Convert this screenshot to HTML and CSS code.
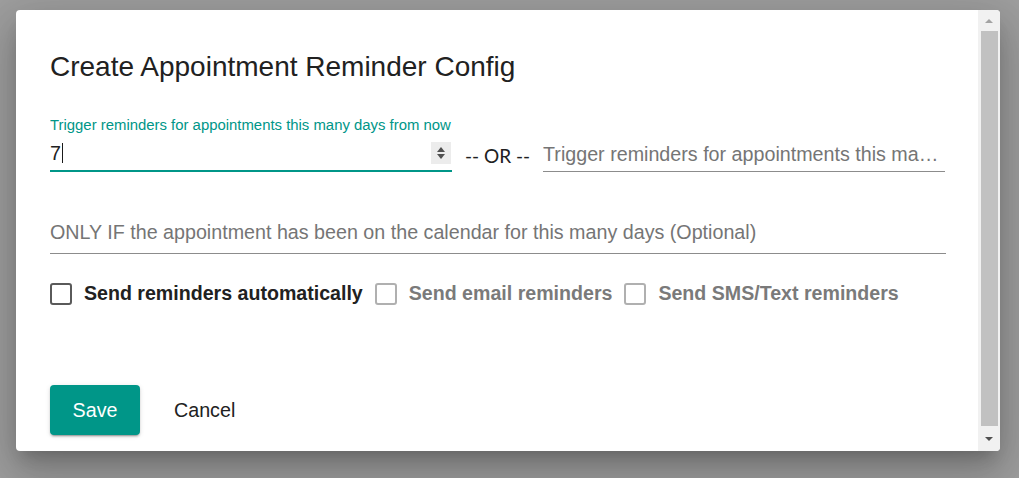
FILE: index.html
```html
<!DOCTYPE html>
<html lang="en">
<head>
<meta charset="utf-8">
<title>Create Appointment Reminder Config</title>
<link rel="stylesheet" href="styles.css">
</head>
<body>
<div class="backdrop">
  <div class="dialog" role="dialog">
    <div class="dialog-main">
      <h2 class="dialog-title">Create Appointment Reminder Config</h2>
      <div class="row">
        <div class="field field-focused">
          <label class="field-label">Trigger reminders for appointments this many days from now</label>
          <div class="field-input">
            <span class="value">7</span><span class="caret"></span>
            <span class="spinner"><span class="tri tri-up"></span><span class="tri tri-down"></span></span>
          </div>
        </div>
        <div class="or">-- OR --</div>
        <div class="field">
          <div class="field-input field-input-plain">
            <input class="text-input" type="text" placeholder="Trigger reminders for appointments this many hours from now">
          </div>
        </div>
      </div>
      <div class="field field-full">
        <div class="field-input field-input-plain">
          <input class="text-input" type="text" placeholder="ONLY IF the appointment has been on the calendar for this many days (Optional)">
        </div>
      </div>
      <div class="checks">
        <label class="check"><span class="box"></span><span class="check-text">Send reminders automatically</span></label>
        <label class="check check-disabled"><span class="box"></span><span class="check-text">Send email reminders</span></label>
        <label class="check check-disabled"><span class="box"></span><span class="check-text">Send SMS/Text reminders</span></label>
      </div>
      <div class="actions">
        <button class="btn btn-primary" type="button">Save</button>
        <button class="btn btn-text" type="button">Cancel</button>
      </div>
    </div>
    <div class="scrollbar" aria-hidden="true">
      <div class="sb-btn sb-up"><span class="sb-arrow-up"></span></div>
      <div class="sb-thumb"></div>
      <div class="sb-btn sb-down"><span class="sb-arrow-down"></span></div>
    </div>
  </div>
</div>
</body>
</html>
```
FILE: styles.css
```css
* { box-sizing: border-box; }
html, body { margin: 0; padding: 0; }
body {
  width: 1019px;
  height: 478px;
  overflow: hidden;
  font-family: "Liberation Sans", Arial, sans-serif;
  background: #9e9e9e;
}
.backdrop {
  padding: 10px 19px 27px 16px;
  height: 478px;
}
.dialog {
  display: flex;
  height: 441px;
  background: #fff;
  border-radius: 4px;
  overflow: hidden;
  box-shadow: 0 11px 15px -7px rgba(0,0,0,0.2), 0 24px 38px 3px rgba(0,0,0,0.14), 0 9px 46px 8px rgba(0,0,0,0.12);
}
.dialog-main {
  flex: 1;
  padding: 40px 33px 16px 34px;
  display: flex;
  flex-direction: column;
}
.dialog-title {
  margin: 0;
  font-weight: 400;
  font-size: 28px;
  line-height: 34px;
  color: #212121;
}
.row {
  display: flex;
  align-items: flex-end;
  margin-top: 33px;
}
.field { flex: 1; display: flex; flex-direction: column; min-width: 0; }
.field-label {
  font-size: 14.9px;
  line-height: 17px;
  color: #009688;
  white-space: nowrap;
  overflow: hidden;
  text-overflow: ellipsis;
  margin-bottom: 2px;
}
.field-input {
  display: flex;
  align-items: center;
  height: 36px;
  border-bottom: 1px solid #8c8c8c;
}
.field-focused .field-input {
  border-bottom: 2px solid #009688;
  height: 36px;
}
.value {
  font-size: 19.7px;
  color: #212121;
  line-height: 22px;
}
.caret {
  width: 1px;
  height: 20px;
  background: #1a1a1a;
  margin-left: 1px;
}
.spinner {
  margin-left: auto;
  margin-right: 1px;
  width: 20px;
  height: 22px;
  background: #ececec;
  display: flex;
  flex-direction: column;
  align-items: center;
  justify-content: center;
  gap: 2px;
}
.tri { width: 0; height: 0; border-left: 4px solid transparent; border-right: 4px solid transparent; }
.tri-up { border-bottom: 5px solid #505050; }
.tri-down { border-top: 5px solid #505050; }
.or {
  font-family: Lato, "Liberation Sans", sans-serif;
  font-size: 19px;
  color: #212121;
  margin: 0 13px 5px;
  line-height: 22px;
  white-space: nowrap;
}
.text-input {
  border: 0;
  outline: 0;
  padding: 0;
  width: 100%;
  font-family: "Liberation Sans", Arial, sans-serif;
  font-size: 19.7px;
  line-height: 22px;
  color: #212121;
  background: transparent;
  text-overflow: ellipsis;
}
.text-input::placeholder { color: #757575; opacity: 1; }
.field-full { margin-top: 43px; flex: none; margin-right: -1px; }
.field-full .field-input { height: 39px; padding-bottom: 4px; }
.checks {
  display: flex;
  align-items: center;
  margin-top: 28px;
  gap: 12px;
}
.check {
  display: flex;
  align-items: center;
  gap: 12px;
  font-size: 19.6px;
  font-weight: 700;
  color: #212121;
}
.box {
  width: 22px;
  height: 22px;
  border: 2px solid #5a5a5a;
  border-radius: 3px;
}
.check-disabled { color: #7a7a7a; }
.check-disabled .box { border-color: #b0b0b0; }
.actions {
  margin-top: auto;
  display: flex;
  align-items: center;
  gap: 10px;
}
.btn {
  font-family: "Liberation Sans", Arial, sans-serif;
  font-size: 19.7px;
  border: 0;
  border-radius: 4px;
  height: 50px;
  cursor: pointer;
}
.btn-primary {
  width: 90px;
  background: #009688;
  color: #fff;
  box-shadow: 0 3px 1px -2px rgba(0,0,0,0.2), 0 2px 2px 0 rgba(0,0,0,0.14), 0 1px 5px 0 rgba(0,0,0,0.12);
}
.btn-text {
  background: transparent;
  color: #212121;
  padding: 0 24px;
}
.scrollbar {
  width: 22px;
  background: #f1f1f1;
  display: flex;
  flex-direction: column;
}
.sb-btn { display: flex; align-items: center; justify-content: center; }
.sb-up { height: 21px; }
.sb-down { height: 25px; }
.sb-thumb { flex: 1; background: #c1c1c1; margin: 0 2px 0 3px; }
.sb-arrow-up { width: 0; height: 0; border-left: 4px solid transparent; border-right: 4px solid transparent; border-bottom: 4px solid #a3a3a3; }
.sb-arrow-down { width: 0; height: 0; border-left: 4px solid transparent; border-right: 4px solid transparent; border-top: 4px solid #505050; }
```
